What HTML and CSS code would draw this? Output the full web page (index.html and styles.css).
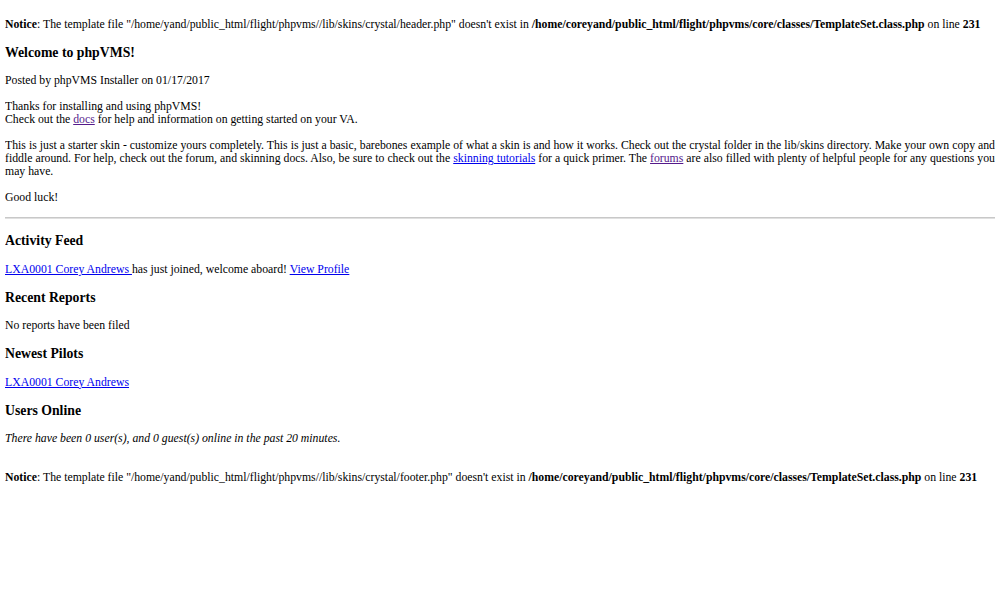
FILE: index.html
```html
<!DOCTYPE html>
<html lang="en">
<head>
  <meta charset="UTF-8" />
  <title>phpVMS</title>
  <link rel="stylesheet" href="styles.css">
</head>
<body>
  <br />
  <b>Notice</b>: The template file "/home/yand/public_html/flight/phpvms//lib/skins/crystal/header.php" doesn't exist in <b>/home/coreyand/public_html/flight/phpvms/core/classes/TemplateSet.class.php</b> on line <b>231</b><br />

  <div class="news">
    <h3>Welcome to phpVMS!</h3>
    <p>Posted by phpVMS Installer on 01/17/2017</p>
    <p>Thanks for installing and using phpVMS!<br />
    Check out the <a class="visited" href="#">docs</a> for help and information on getting started on your VA.</p>
    <p class="justify">This is just a starter skin - customize yours completely. This is just a basic, barebones example of what a skin is and how it works. Check out the crystal folder in the lib/skins directory. Make your own copy and fiddle around. For help, check out the forum, and skinning docs. Also, be sure to check out the <a href="#">skinning tutorials</a> for a quick primer. The <a class="visited" href="#">forums</a> are also filled with plenty of helpful people for any questions you may have.</p>
    <p>Good luck!</p>
  </div>
  <hr />

  <h3>Activity Feed</h3>
  <p><a href="#">LXA0001 Corey Andrews </a>has just joined, welcome aboard! <a href="#">View Profile</a></p>

  <h3>Recent Reports</h3>
  <p>No reports have been filed</p>

  <h3>Newest Pilots</h3>
  <p><a href="#">LXA0001 Corey Andrews</a></p>

  <h3>Users Online</h3>
  <p><i>There have been 0 user(s), and 0 guest(s) online in the past 20 minutes.</i></p>

  <br />
  <b>Notice</b>: The template file "/home/yand/public_html/flight/phpvms//lib/skins/crystal/footer.php" doesn't exist in <b>/home/coreyand/public_html/flight/phpvms/core/classes/TemplateSet.class.php</b> on line <b>231</b><br />
</body>
</html>
```

FILE: styles.css
```css
body {
  margin: 5px;
  font-family: "Liberation Serif", "Times New Roman", serif;
  font-size: 11.76px;
  line-height: 13px;
  color: #000;
  background: #fff;
}

h3 {
  font-size: 1.17em;
  line-height: 15px;
  margin: 14px 0 14.4px;
}

p {
  margin: 13px 0;
}

.justify {
  text-align: justify;
}

a {
  color: #0000ee;
}

a.visited {
  color: #551a8b;
}

hr {
  margin: 5px 0;
  border: 0;
  border-top: 1px solid #c8c8c8;
  border-bottom: 1px solid #e0e0e0;
}
```
